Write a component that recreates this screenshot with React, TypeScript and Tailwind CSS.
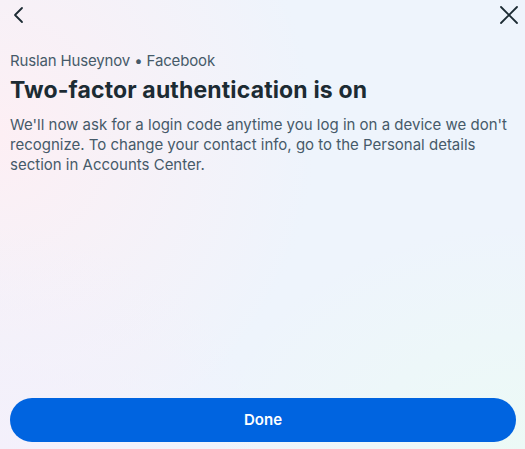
import React from "react";

export default function App() {
  return (
    <div
      className="relative flex h-[449px] w-[525px] flex-col overflow-hidden bg-[#eef4fc] text-[#1c2b33]"
      style={{ fontFamily: "Inter, 'Noto Sans', sans-serif" }}
    >
      <div className="pointer-events-none absolute inset-0 bg-[radial-gradient(ellipse_60%_75%_at_0%_30%,#fdeff4_0%,rgba(253,239,244,0)_100%)]" />
      <div className="pointer-events-none absolute inset-0 bg-[radial-gradient(ellipse_60%_50%_at_100%_100%,#ecfaf6_0%,rgba(236,250,246,0)_100%)]" />
      <div className="pointer-events-none absolute inset-0 bg-[radial-gradient(ellipse_50%_50%_at_0%_100%,#f4f0fb_0%,rgba(244,240,251,0)_100%)]" />
      <div className="relative flex items-center justify-between pl-[9px] pr-[5px] pt-[4px]">
        <button className="flex h-[20px] w-[20px] items-center justify-center">
          <svg width="20" height="20" viewBox="0 0 20 20" fill="none">
            <path d="M13 3L6 10L13 17" stroke="#1c2b33" strokeWidth="1.8" strokeLinecap="round" strokeLinejoin="round" />
          </svg>
        </button>
        <button className="flex h-[22px] w-[22px] items-center justify-center">
          <svg width="22" height="22" viewBox="0 0 22 22" fill="none">
            <path d="M3 3L19 19M19 3L3 19" stroke="#1c2b33" strokeWidth="1.8" strokeLinecap="round" />
          </svg>
        </button>
      </div>
      <div className="relative flex flex-col px-[10px] pt-[25px]">
        <div className="text-[15px] leading-[20px] tracking-[-0.15px] text-[#465a69]">Ruslan Huseynov • Facebook</div>
        <h1 className="mt-[5px] text-[23px] font-bold leading-[28px] tracking-[0.15px]">Two-factor authentication is on</h1>
        <p className="mt-[11px] text-[15px] leading-[20px] text-[#465a69]">
          We'll now ask for a login code anytime you log in on a device we don't recognize. To change your contact info, go to the Personal details section in Accounts Center.
        </p>
      </div>
      <div className="relative mt-auto pb-[7px] pl-[10px] pr-[9px]">
        <button className="flex h-[44px] w-full items-center justify-center rounded-full bg-[#0064e0] text-[15px] font-semibold text-white">
          Done
        </button>
      </div>
    </div>
  );
}
